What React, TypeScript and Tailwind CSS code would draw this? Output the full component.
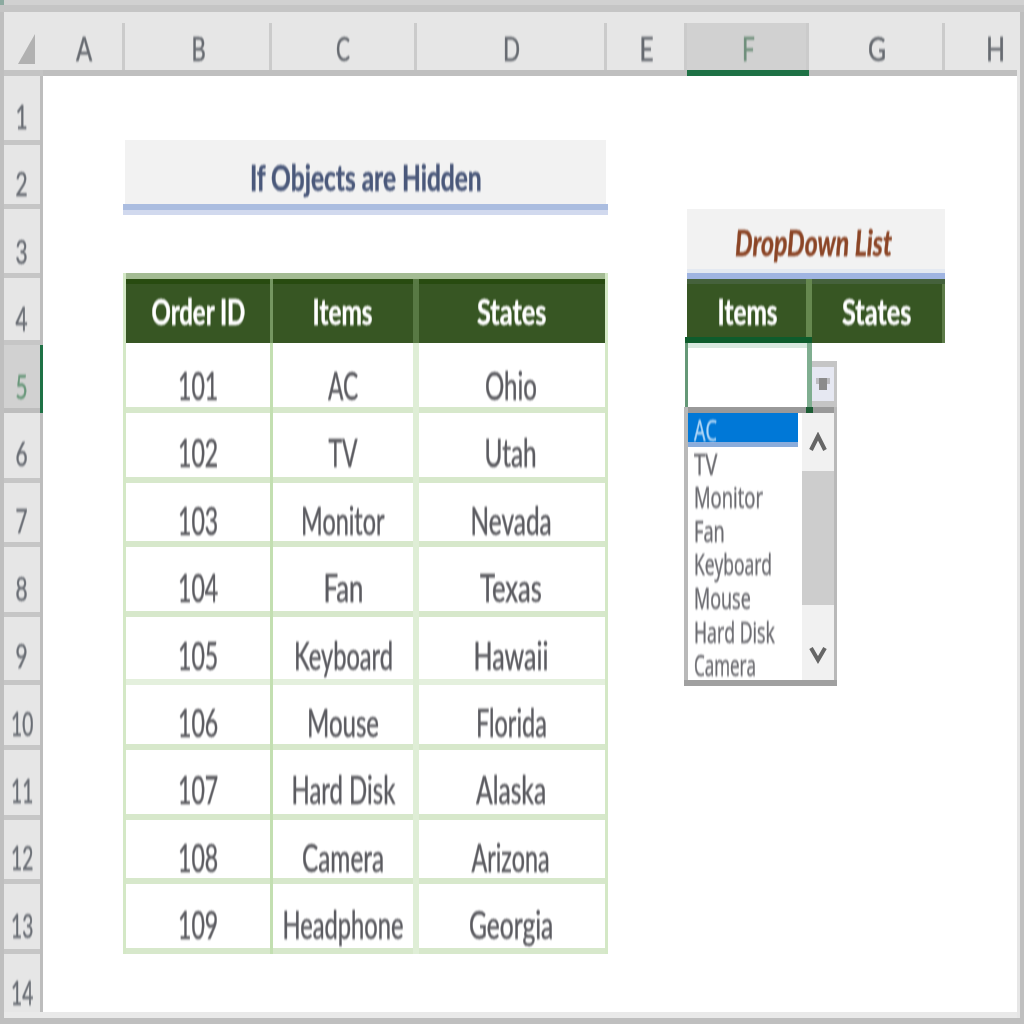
import React, { useLayoutEffect, useRef, useState } from "react";

/* Single line of text condensed horizontally to a given width. */
function Fit({ w, className = "", left = false, children }: { w: number; className?: string; left?: boolean; children: string }) {
  const ref = useRef<HTMLSpanElement>(null);
  const [scale, setScale] = useState(0.6);
  useLayoutEffect(() => {
    if (ref.current) setScale(w / ref.current.offsetWidth);
  }, [w, children]);
  return (
    <span
      ref={ref}
      className={`block shrink-0 whitespace-nowrap leading-none blur-[0.9px] [-webkit-text-stroke:0.5px_currentColor] ${left ? "origin-left" : "origin-center"} ${className}`}
      style={{ transform: `scaleX(${scale})` }}
    >
      {children}
    </span>
  );
}

const columns = [
  { name: "A", cell: "w-[82px] pl-[3px]", w: 16 },
  { name: "B", cell: "w-[147px] pl-[3px]", w: 14 },
  { name: "C", cell: "w-[145px]", w: 14 },
  { name: "D", cell: "w-[190px] pl-[2px]", w: 17 },
  { name: "E", cell: "w-[80px] pl-[2px]", w: 14 },
  { name: "F", cell: "w-[122px] pl-[4px]", w: 13, active: true },
  { name: "G", cell: "w-[136px] pl-[4px]", w: 18 },
  { name: "H", cell: "w-[72px] pl-[30px]", w: 19, last: true },
];

/* Bottom edge of every sheet row; row 1 starts at 76. */
const rowEnds = [145, 209, 278, 345, 413, 483, 547, 617, 685, 750, 820, 884, 954, 1018];

const orders: [string, string, number, string, number][] = [
  ["101", "AC", 30, "Ohio", 52],
  ["102", "TV", 29, "Utah", 52],
  ["103", "Monitor", 83, "Nevada", 81],
  ["104", "Fan", 40, "Texas", 62],
  ["105", "Keyboard", 99, "Hawaii", 75],
  ["106", "Mouse", 72, "Florida", 71],
  ["107", "Hard Disk", 104, "Alaska", 70],
  ["108", "Camera", 82, "Arizona", 78],
  ["109", "Headphone", 121, "Georgia", 84],
];

const options: [string, number][] = [
  ["AC", 23],
  ["TV", 23],
  ["Monitor", 69],
  ["Fan", 31],
  ["Keyboard", 78],
  ["Mouse", 57],
  ["Hard Disk", 81],
  ["Camera", 62],
];

function ColumnHeader() {
  return (
    <div className="flex h-[64px] bg-[#e6e6e6]">
      <div className="flex h-full w-[39px] shrink-0 flex-col justify-between">
        <svg className="mt-[22px] ml-[14px] block h-[30px] w-[18px]" viewBox="0 0 18 30">
          <path d="M17 0V30H0Z" fill="#b1b1b1" />
        </svg>
        <div className="h-[6px] bg-[#c4c4c4]" />
      </div>
      {columns.map((c) => (
        <div key={c.name} className="flex shrink-0 flex-col">
          <div className={`mt-[11px] flex h-[47px] ${c.cell} ${c.active ? "bg-[#d1d1d1]" : ""} items-start justify-center ${c.last ? "" : "border-r-[3px] border-[#cbcbcb]"}`}>
            <Fit w={c.w} className={`mt-[9px] text-[33px] ${c.active ? "text-[#6f8f7b]" : "text-[#666a70]"}`}>{c.name}</Fit>
          </div>
          <div className={`h-[6px] ${c.active ? "bg-[#1e7145]" : "bg-[#bfbfbf]"}`} />
        </div>
      ))}
    </div>
  );
}

function RowHeader() {
  return (
    <div className="flex w-[39px] shrink-0 flex-col bg-[#e6e6e6]">
      {rowEnds.map((end, i) => {
        const start = i === 0 ? 76 : rowEnds[i - 1];
        const active = i === 4;
        return (
          <div key={end} className="flex shrink-0" style={{ height: end - start }}>
            <div
              className={`flex w-[36px] shrink-0 items-start justify-center border-b-[5px] ${active ? "border-b-[#bdbdbd] bg-[#d1d1d1]" : "border-b-[#c6c6c6]"} ${i === 13 ? "border-b-[#e0e0e0]" : ""}`}
              style={{ paddingTop: 118 + 67.4 * i - start - 18 }}
            >
              <Fit w={i > 8 ? 22 : 12} className={`text-[33px] ${active ? "text-[#68977a]" : "text-[#696d74]"}`}>{String(i + 1)}</Fit>
            </div>
            <div className={`w-[3px] shrink-0 ${active ? "bg-[#1e7145]" : "bg-[#bdbdbd]"}`} />
          </div>
        );
      })}
    </div>
  );
}

function OrderTable() {
  return (
    <div className="w-[485px] shrink-0">
      <div className="mt-[64px] mr-[2px] ml-[2px] flex h-[64px] items-start justify-center bg-[#f2f2f2]">
        <Fit w={232} className="mt-[18px] text-[37px] font-bold text-[#4a587a]">If Objects are Hidden</Fit>
      </div>
      <div className="h-[6px] bg-[#abbde0]" />
      <div className="h-[5px] bg-[#d1d9ee]" />
      <div className="mt-[58px] border-x-[3px] border-[#d4e8c6]">
        <div className="h-[6px] bg-[#a3bb93]" />
        <div className="flex h-[64px] border-t-[5px] border-[#284b10] bg-[#375623] text-[37px] font-bold text-white">
          <div className="flex w-[144px] justify-center pt-[8px]"><Fit w={94}>Order ID</Fit></div>
          <div className="-mt-[5px] w-[3px] bg-[#759661]" />
          <div className="flex w-[140px] justify-center pt-[8px]"><Fit w={60}>Items</Fit></div>
          <div className="-mt-[5px] w-[6px] bg-[#587944]" />
          <div className="flex flex-1 justify-center pt-[8px]"><Fit w={69}>States</Fit></div>
        </div>
        {orders.map((o, i) => {
          const start = i === 0 ? 343 : rowEnds[i + 3];
          const pad = { paddingTop: 387 + 67.4 * i - start - 21 };
          return (
            <div
              key={o[0]}
              className={`flex border-b-[6px] text-[38px] text-[#5b5b60] ${i === 4 ? "border-[#e4f0dd]" : "border-[#d7e8cb]"}`}
              style={{ height: rowEnds[i + 4] - start }}
            >
              <div className="flex w-[144px] justify-center" style={pad}><Fit w={40}>{o[0]}</Fit></div>
              <div className="-mb-[6px] w-[3px] bg-[#c3dfb1]" />
              <div className="flex w-[140px] justify-center" style={pad}><Fit w={o[2]}>{o[1]}</Fit></div>
              <div className="-mb-[6px] w-[6px] bg-[#dfeed6]" />
              <div className="flex flex-1 justify-center pr-[2px]" style={pad}><Fit w={o[4]}>{o[3]}</Fit></div>
            </div>
          );
        })}
      </div>
    </div>
  );
}

function DropdownList() {
  return (
    <div className="absolute top-[64px] left-[-3px] w-[153px] border-r-[3px] border-l-[4px] border-[#b9b9b9] bg-white">
      <div className="flex h-[6px] bg-[#999999]">
        <div className="ml-[118px] w-[7px] bg-[#1c5c34]" />
      </div>
      <div className="flex h-[267px]">
        <div className="w-[110px]">
          {options.map(([name, w], i) => (
            <div
              key={name}
              className={`flex h-[33.6px] pl-[6px] ${i === 0 ? "border-b-[5px] border-[#8aacdb] bg-[#0078d7] text-[#b5d9f7]" : "text-[#6b6b70]"}`}
            >
              <Fit left w={w} className="mt-[2px] font-['Open_Sans'] text-[30px]">{name}</Fit>
            </div>
          ))}
        </div>
        <div className="ml-[4px] flex w-[32px] flex-col items-center bg-[#f1f1f1]">
          <svg className="mt-[19px] h-[21px] w-[18px] shrink-0" viewBox="0 0 18 21">
            <path d="M2 18L9 4L16 18" fill="none" stroke="#666" strokeWidth="4" />
          </svg>
          <div className="mt-[18px] h-[134px] w-full shrink-0 bg-[#cdcdcd]" />
          <svg className="mt-[40px] h-[19px] w-[18px] shrink-0" viewBox="0 0 18 19">
            <path d="M2 3L9 15L16 3" fill="none" stroke="#666" strokeWidth="4" />
          </svg>
        </div>
      </div>
      <div className="-mr-[3px] -ml-[4px] h-[6px] bg-[#a0a0a0]" />
    </div>
  );
}

function DropdownTable() {
  return (
    <div className="ml-[79px] w-[258px] shrink-0">
      <div className="mt-[133px] flex h-[64px] items-start justify-center border-b-[4px] border-[#e4e9f1] bg-[#f2f2f2]">
        <Fit w={157} className="mt-[15px] mr-[4px] text-[36px] font-bold text-[#8b4526] italic">DropDown List</Fit>
      </div>
      <div className="h-[6px] bg-[#9fb4e1]" />
      <div className="flex h-[64px] border-t-[5px] border-t-[#45613c] bg-[#375623] text-[37px] font-bold text-white">
        <div className="flex w-[119px] justify-center pt-[8px] pl-[3px]"><Fit w={60}>Items</Fit></div>
        <div className="-mt-[5px] w-[6px] bg-[#66884f]" />
        <div className="flex flex-1 justify-center pt-[8px]"><Fit w={69}>States</Fit></div>
        <div className="w-[3px] bg-[#5d7b48]" />
      </div>
      <div className="relative flex">
        <div className="-mt-[6px] -ml-[2px] h-[76px] w-[127px]">
          <div className="h-[6px] bg-[#0e5c2c]" />
          <div className="h-[70px] border-r-[5px] border-l-[3px] border-r-[#7fae90] border-l-[#659877] bg-white">
            <div className="h-[5px] bg-[#d8e9df]" />
          </div>
        </div>
        <div className="mt-[18px] flex h-[46px] w-[25px] items-center justify-center border-y-[6px] border-r-[3px] border-[#c5c5c5] bg-[#e6e8f2]">
          <svg className="h-[12px] w-[14px]" viewBox="0 0 14 12">
            <path d="M0 0H14V6H0Z" fill="#bcbcc0" />
            <path d="M3 0H11V12H3Z" fill="#8b8b8b" />
          </svg>
        </div>
        <DropdownList />
      </div>
    </div>
  );
}

export default function App() {
  return (
    <div className="flex h-[1024px] w-[1024px] flex-col overflow-hidden bg-[#bfbfbf] font-['Lato',sans-serif]">
      <div className="flex h-[5px] shrink-0 bg-[#d1d1d1]"><div className="w-[4px] bg-[#8caaa0]" /></div>
      <div className="h-[7px] shrink-0 bg-[#c5c5c5]" />
      <div className="ml-[4px] w-[1016px] overflow-hidden border-r-[3px] border-[#e6e6e6] bg-white">
        <ColumnHeader />
        <div className="flex h-[942px] overflow-hidden border-b-[6px] border-[#e9e9e9]">
          <RowHeader />
          <div className="w-[80px] shrink-0" />
          <OrderTable />
          <DropdownTable />
        </div>
      </div>
    </div>
  );
}
